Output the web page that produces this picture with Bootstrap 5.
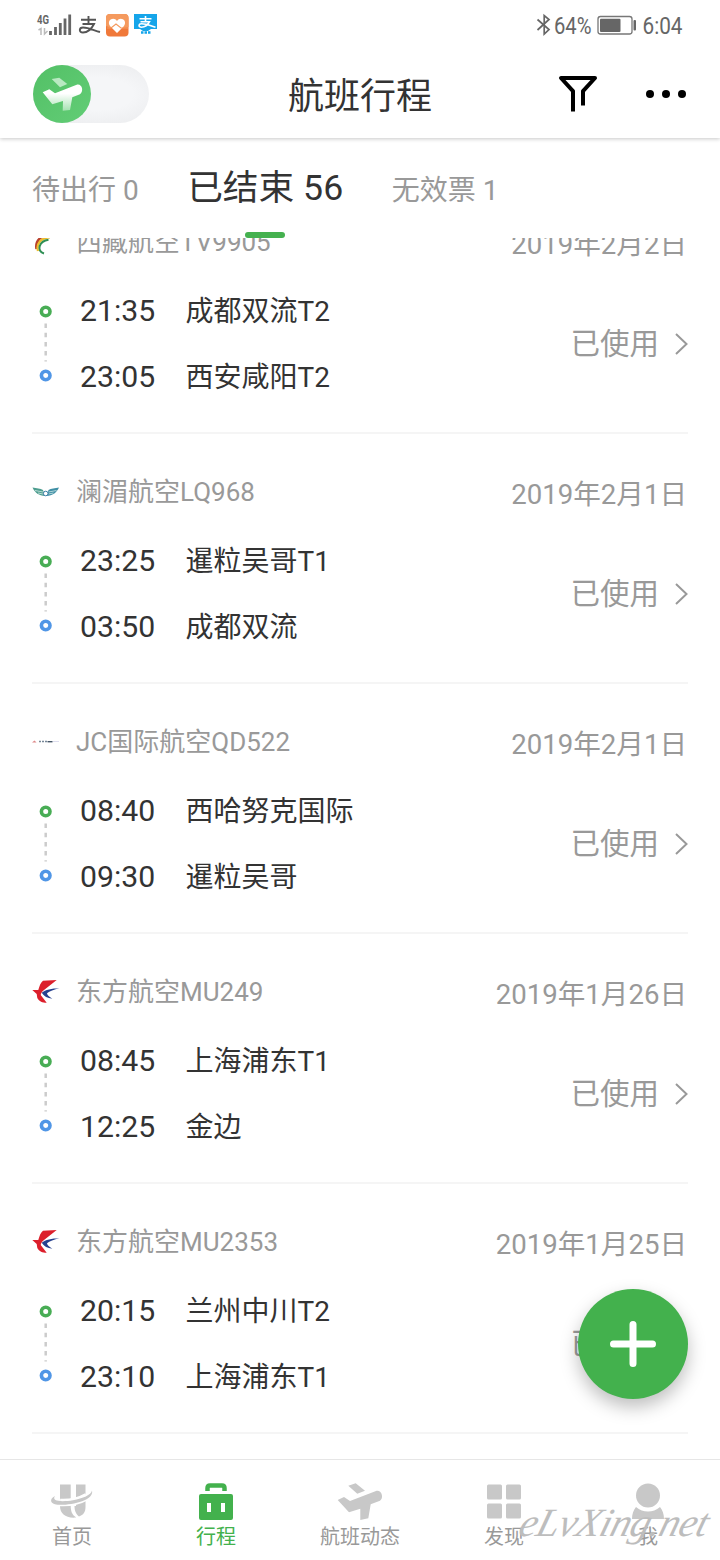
<!DOCTYPE html>
<html lang="zh-CN">
<head>
<meta charset="utf-8">
<meta name="viewport" content="width=device-width, initial-scale=1">
<title>航班行程</title>
<link href="https://cdn.jsdelivr.net/npm/bootstrap@5.3.0/dist/css/bootstrap.min.css" rel="stylesheet">
<style>
  body { font-family: Roboto, "Noto Sans CJK SC", sans-serif; color: #333; background: #fff; }
  .phone { width: 720px; height: 1560px; overflow: hidden; }
  .statusbar { height: 50px; background: #fff; position: relative; z-index: 4; }
  .topbar { height: 88px; padding: 0 32px; box-shadow: 0 1px 4px rgba(0,0,0,.22); z-index: 3; clip-path: inset(0 0 -8px 0); }
  .side { width: 130px; }
  .page-title { font-size: 36px; line-height: 40px; padding-top: 5px; }
  .toggle-track { width: 116px; height: 58px; margin-left: 1px; background: radial-gradient(ellipse at 55% 50%, #f5f6f8 40%, #e9eaec 100%); }
  .toggle-knob { width: 58px; height: 58px; background: linear-gradient(135deg, #53c066, #62cd76); }
  .tabs { height: 100px; padding: 0 32px; font-size: 28px; color: #999; gap: 48.500px; }
  .tab-item { line-height: 40px; padding-top: 6px; }
  .tab-on { font-size: 35.700px; color: #333; padding-top: 0; }
  .tab-bar { left: 245px; top: 94px; width: 40px; height: 6px; background: #45b14f; z-index: 2; }
  .trips { height: 1221px; overflow: hidden; }
  .trips-inner { margin-top: -54px; }
  .trip { height: 250px; padding: 38px 32px 0; position: relative; }
  .trip::after { content: ""; display: block; height: 2px; background: #f5f5f5; margin-top: 22px; }
  .trip-head { height: 40px; margin-bottom: 16px; color: #999; font-size: 26px; line-height: 40px; }
  .trip-logo { width: 28px; height: 28px; margin-right: 16px; overflow: visible; }
  .trip-date { font-size: 27.600px; padding-top: 5px; margin-right: 1px; }
  .trip-body { height: 132px; }
  .route-line { width: 28px; height: 132px; margin-right: 20px; }
  .leg { height: 66px; line-height: 66px; }
  .leg-time { font-size: 30.200px; width: 105.500px; }
  .leg-port { font-size: 28px; padding-top: 1px; }
  .trip-state { font-size: 29.500px; color: #999; }
  .state-arrow { margin-left: 15px; }
  .fab { right: 32px; top: 1289px; width: 110px; height: 110px; background: #43b14d; box-shadow: 0 8px 18px rgba(0,0,0,.26); z-index: 4; }
  .bottomnav { height: 101px; border-top: 1px solid #e6e6e6; color: #999; font-size: 20px; background: #fff; }
  .bottomnav svg { width: 44px; height: 40px; margin-top: 22px; overflow: visible; }
  .nav-text { line-height: 26px; margin-top: 2px; }
  .nav-on { color: #43b14d; }
  .stamp { left: 510px; top: 1495px; z-index: 5; }
</style>
</head>
<body>
<div class="phone position-relative d-flex flex-column">
  <div class="statusbar d-flex justify-content-between flex-shrink-0">
    <svg width="200" height="50" viewBox="0 0 200 50">
      <text x="37" y="24" font-size="13" font-weight="700" fill="#666" textLength="12" lengthAdjust="spacingAndGlyphs">4G</text>
      <path d="M38.500 30l2.500-1.500V35M44.500 28v6l3-3" stroke="#bbb" stroke-width="1.500" fill="none"/>
      <path d="M50.500 31v4M55.500 27v8M60.300 23v12M65 18.500v16.500M69.700 14.500v20.500" stroke="#666" stroke-width="2.800"/>
      <path d="M81 19.700h15M88.500 16v8M82.500 24h11.500c-2 4-6 8.500-11 8.500-4.500 0-4-5 0-5 6 0 11 3 17 4.500" stroke="#555" fill="none" stroke-width="1.900"/>
      <rect x="106" y="14" width="22.500" height="22.500" rx="4" fill="#f0793a"/>
      <path d="M106 26V18a4 4 0 0 1 4-4h14.500a4 4 0 0 1 4 4v9l-7 1-6-4-5 4z" fill="#f59a5e"/>
      <path d="M117 33l-7-7c-4-6 4-10 7-5 3-5 11-1 7 5z" fill="#fff"/>
      <path d="M107 28h4l5-4 5 4h7" stroke="#f59a5e" stroke-width="1.200" fill="none"/>
      <path d="M134 14h23v15h-6l-3 2h-5l-3-2h-6z" fill="#15a5ea"/>
      <path d="M139.500 18.800h12M145.500 16v5.500M140.500 21.700h9c-1.500 3-4.500 5.500-8 5.500-3.500 0-3-3.500 0-3.500 5 0 9 2 14 3.500" stroke="#fff" stroke-width="1.600" fill="none"/>
      <path d="M141 32.500h10" stroke="#15a5ea" stroke-width="2.500" stroke-dasharray="2.500 1"/>
    </svg>
    <svg width="190" height="50" viewBox="530 0 190 50">
      <path d="M537.500 19.500l11.500 10-4.800 4.500V15.500l4.800 4-11.500 10.500" fill="none" stroke="#666" stroke-width="1.700"/>
      <text x="554" y="34" font-size="23.500" fill="#666" textLength="37.500" lengthAdjust="spacingAndGlyphs">64%</text>
      <rect x="598" y="16.500" width="34" height="17.500" rx="2.500" fill="none" stroke="#777" stroke-width="1.300"/>
      <rect x="600" y="18.700" width="20.500" height="13.200" rx="1" fill="#666"/>
      <rect x="633.500" y="20" width="2.500" height="10.500" rx="1" fill="#666"/>
      <text x="642.500" y="34" font-size="23.500" fill="#666" textLength="40" lengthAdjust="spacingAndGlyphs">6:04</text>
    </svg>
  </div>

  <div class="topbar d-flex align-items-center justify-content-between flex-shrink-0 position-relative">
    <div class="side">
      <div class="toggle-track rounded-pill">
        <div class="toggle-knob rounded-circle">
          <svg width="58" height="58" viewBox="0 0 58 58">
            <defs><linearGradient id="pg" x1="0" y1="0" x2="0" y2="1"><stop offset=".35" stop-color="#fff"/><stop offset="1" stop-color="#a5e2b1"/></linearGradient></defs>
            <path d="M18.700 14l7.600-1.300 8 6.300-7.300 3.300z" fill="#b9e9c2"/>
            <path d="M9.700 27.300l6.600-3 5.700 4 21.700-8.600c5.300-1.500 7.500 6.600 3.300 9.600l-7.700 3L37 45l-7.300.700.3-9.700-10.700 3.300z" fill="url(#pg)"/>
          </svg>
        </div>
      </div>
    </div>
    <div class="page-title">航班行程</div>
    <div class="side d-flex justify-content-end">
      <svg width="130" height="44" viewBox="558 72 130 44">
        <path d="M573 111.500V91.200L561 78h34L583 91.200V105.500" fill="none" stroke="#000" stroke-width="4" stroke-linejoin="round"/>
        <g fill="#000"><circle cx="650" cy="94" r="4"/><circle cx="666" cy="94" r="4"/><circle cx="682" cy="94" r="4"/></g>
      </svg>
    </div>
  </div>

  <div class="tabs d-flex align-items-center flex-shrink-0 position-relative">
    <div class="tab-item">待出行 0</div>
    <div class="tab-item tab-on">已结束 56</div>
    <div class="tab-item">无效票 1</div>
    <div class="tab-bar position-absolute rounded-pill"></div>
  </div>

  <div class="trips flex-shrink-0"><div class="trips-inner" id="trips"></div></div>

  <div class="bottomnav d-flex flex-shrink-0 text-center">
    <div class="flex-fill w-25 d-flex flex-column align-items-center">
      <svg viewBox="0 0 44 40">
        <path d="M10 2.500h10.700V23c0 6 1 9.500 5.500 12.500C16 36.500 10 32 10 24zM26 2.500h9.500V25c0 5-2 8-6.500 9.500-2.500-2-4.500-5-4.500-10.500H26z" fill="#c8c8c8"/>
        <path d="M10 20.500c10 .5 20-2 27-6" stroke="#fff" stroke-width="7.500" fill="none"/>
        <path d="M5 14C-1 17 0 22 7.500 22.800c14 .7 37-4.300 34.500-14.300-1 4.500-9 8-19 9.700C12 20 1 19.500 5 14z" fill="#c8c8c8"/>
      </svg>
      <div class="nav-text">首页</div>
    </div>
    <div class="flex-fill w-25 d-flex flex-column align-items-center nav-on">
      <svg viewBox="0 0 44 40"><path d="M13.500 9V6c0-2 1-2.500 2.500-2.500h12c1.500 0 2.500.5 2.500 2.500v3" fill="none" stroke="#43b14d" stroke-width="4.500"/><path d="M7 12h30q2 0 2 2v22q0 2-2 2H7q-2 0-2-2V14q0-2 2-2zM13 21v9h4v-9zM27 21v9h4v-9z" fill="#43b14d" fill-rule="evenodd"/></svg>
      <div class="nav-text">行程</div>
    </div>
    <div class="flex-fill w-25 d-flex flex-column align-items-center">
      <svg viewBox="0 0 44 40" fill="#c8c8c8"><path d="M10.300 3.700l7.400-2.400L27 8.700l-7.700 3zM-.3 18L6 15l6 4L38 9c6-1.500 8 7.500 4 9.700l-9.300 3.600-2.400 14-8 1.700V26.700L11 30.300z"/></svg>
      <div class="nav-text">航班动态</div>
    </div>
    <div class="flex-fill w-25 d-flex flex-column align-items-center">
      <svg viewBox="0 0 44 40" fill="#c8c8c8"><rect x="5" y="2.500" width="15" height="15" rx="1.500"/><rect x="24" y="2.500" width="15" height="15" rx="1.500"/><rect x="5" y="21.500" width="15" height="15" rx="1.500"/><rect x="24" y="21.500" width="15" height="15" rx="1.500"/></svg>
      <div class="nav-text">发现</div>
    </div>
    <div class="flex-fill w-25 d-flex flex-column align-items-center">
      <svg viewBox="0 0 44 40" fill="#c8c8c8"><circle cx="22" cy="13.500" r="12"/><path d="M6 37c0-5 1.500-9 4-12 7 6 17 6 24 0 2.500 3 4 7 4 12z"/></svg>
      <div class="nav-text">我</div>
    </div>
  </div>

  <div class="fab position-absolute rounded-circle d-flex align-items-center justify-content-center">
    <svg width="50" height="50" viewBox="0 0 50 50"><path d="M25 5.500v39M5.500 25h39" stroke="#fff" stroke-width="7" stroke-linecap="round"/></svg>
  </div>

  <svg class="stamp position-absolute" width="210" height="60" viewBox="0 0 210 60">
    <text transform="translate(7 41) skewX(-16)" font-family="Liberation Serif, serif" font-style="italic" font-size="40" fill="#bdbdbd" textLength="188" lengthAdjust="spacing">eLvXing.net</text>
  </svg>
</div>

<script>
  const logos = {
    tibet: '<path d="M4.500 21C3 13 9 7 18.500 7" stroke="#b8402c" stroke-width="2.500" fill="none"/><path d="M6 23C4 16 9 9.500 18 9.300" stroke="#edbd2e" stroke-width="2.300" fill="none"/><path d="M12 25.500C4 23 7 13 16.500 11.700" stroke="#2f8f55" stroke-width="2" fill="none"/>',
    lanmei: '<path d="M.5 9.500c4 1 8 1 10.500 2.500l2 6C7 17.500 3 15 .5 9.500z" fill="#4d9d8f"/><path d="M27 9.500c-4 1-8 1-10.500 2.500l-2 6c6-.5 10-3 12.500-8.500z" fill="#3f8fa5"/><path d="M3 12.500l8 1.500M24.500 12.500l-8 1.500M6 15l5 1M21.500 15l-5 1" stroke="#e4f3ef" stroke-width=".7"/><circle cx="13.700" cy="15.500" r="2.300" fill="#fff" stroke="#3c7fa8" stroke-width="1"/>',
    jc: '<path d="M0 14.500l2.500-2 2 2z" fill="#d88"/><path d="M7 13.500h8" stroke="#789" stroke-width="1.300" stroke-dasharray="2 1"/><path d="M15.500 13.700h5" stroke="#456" stroke-width="1.400"/><path d="M21 13.500h6" stroke="#dde" stroke-width="1"/>',
    mu: '<path d="M24.700 2L11 2.700C8.500 4.500 7.500 8 6.300 12H.3l4.400 4 .6 4c2 3.700 5 4.700 9.400 4.700L8.700 17c.5-2.500 2-4 4.300-5.700z" fill="#dc1f2b"/><path d="M27.500 10.300c-8 .2-14 1.500-17.800 4.400 2 3.500 6 5.500 10.600 6-3-1.700-5-3.500-5.300-5.400 2.500-2.300 7-3.500 12.500-5z" fill="#26418f"/>'
  };
  const trips = [
    ['tibet', '西藏航空TV9905', '2019年2月2日', '21:35', '成都双流T2', '23:05', '西安咸阳T2'],
    ['lanmei', '澜湄航空LQ968', '2019年2月1日', '23:25', '暹粒吴哥T1', '03:50', '成都双流'],
    ['jc', 'JC国际航空QD522', '2019年2月1日', '08:40', '西哈努克国际', '09:30', '暹粒吴哥'],
    ['mu', '东方航空MU249', '2019年1月26日', '08:45', '上海浦东T1', '12:25', '金边'],
    ['mu', '东方航空MU2353', '2019年1月25日', '20:15', '兰州中川T2', '23:10', '上海浦东T1']
  ];
  document.getElementById('trips').innerHTML = trips.map(t => `
    <div class="trip">
      <div class="trip-head d-flex align-items-center">
        <svg class="trip-logo" viewBox="0 0 28 28">${logos[t[0]]}</svg>
        <div>${t[1]}</div>
        <div class="trip-date ms-auto">${t[2]}</div>
      </div>
      <div class="trip-body d-flex align-items-center">
        <svg class="route-line" viewBox="0 0 28 132" fill="none">
          <circle cx="13.700" cy="33.500" r="4.300" stroke="#48ad55" stroke-width="3.600"/>
          <path d="M13.700 45.500v38" stroke="#ccc" stroke-width="2.500" stroke-dasharray="4.500 4.700"/>
          <circle cx="13.700" cy="97.500" r="4.300" stroke="#5096e6" stroke-width="3.600"/>
        </svg>
        <div class="flex-grow-1">
          <div class="leg d-flex"><div class="leg-time">${t[3]}</div><div class="leg-port">${t[4]}</div></div>
          <div class="leg d-flex"><div class="leg-time">${t[5]}</div><div class="leg-port">${t[6]}</div></div>
        </div>
        <div class="trip-state">已使用</div>
        <svg class="state-arrow" width="14" height="24" viewBox="0 0 14 24"><path d="M2 2l10.500 10L2 22" fill="none" stroke="#999" stroke-width="2"/></svg>
      </div>
    </div>`).join('');
</script>
<script src="https://cdn.jsdelivr.net/npm/bootstrap@5.3.0/dist/js/bootstrap.bundle.min.js"></script>
</body>
</html>
